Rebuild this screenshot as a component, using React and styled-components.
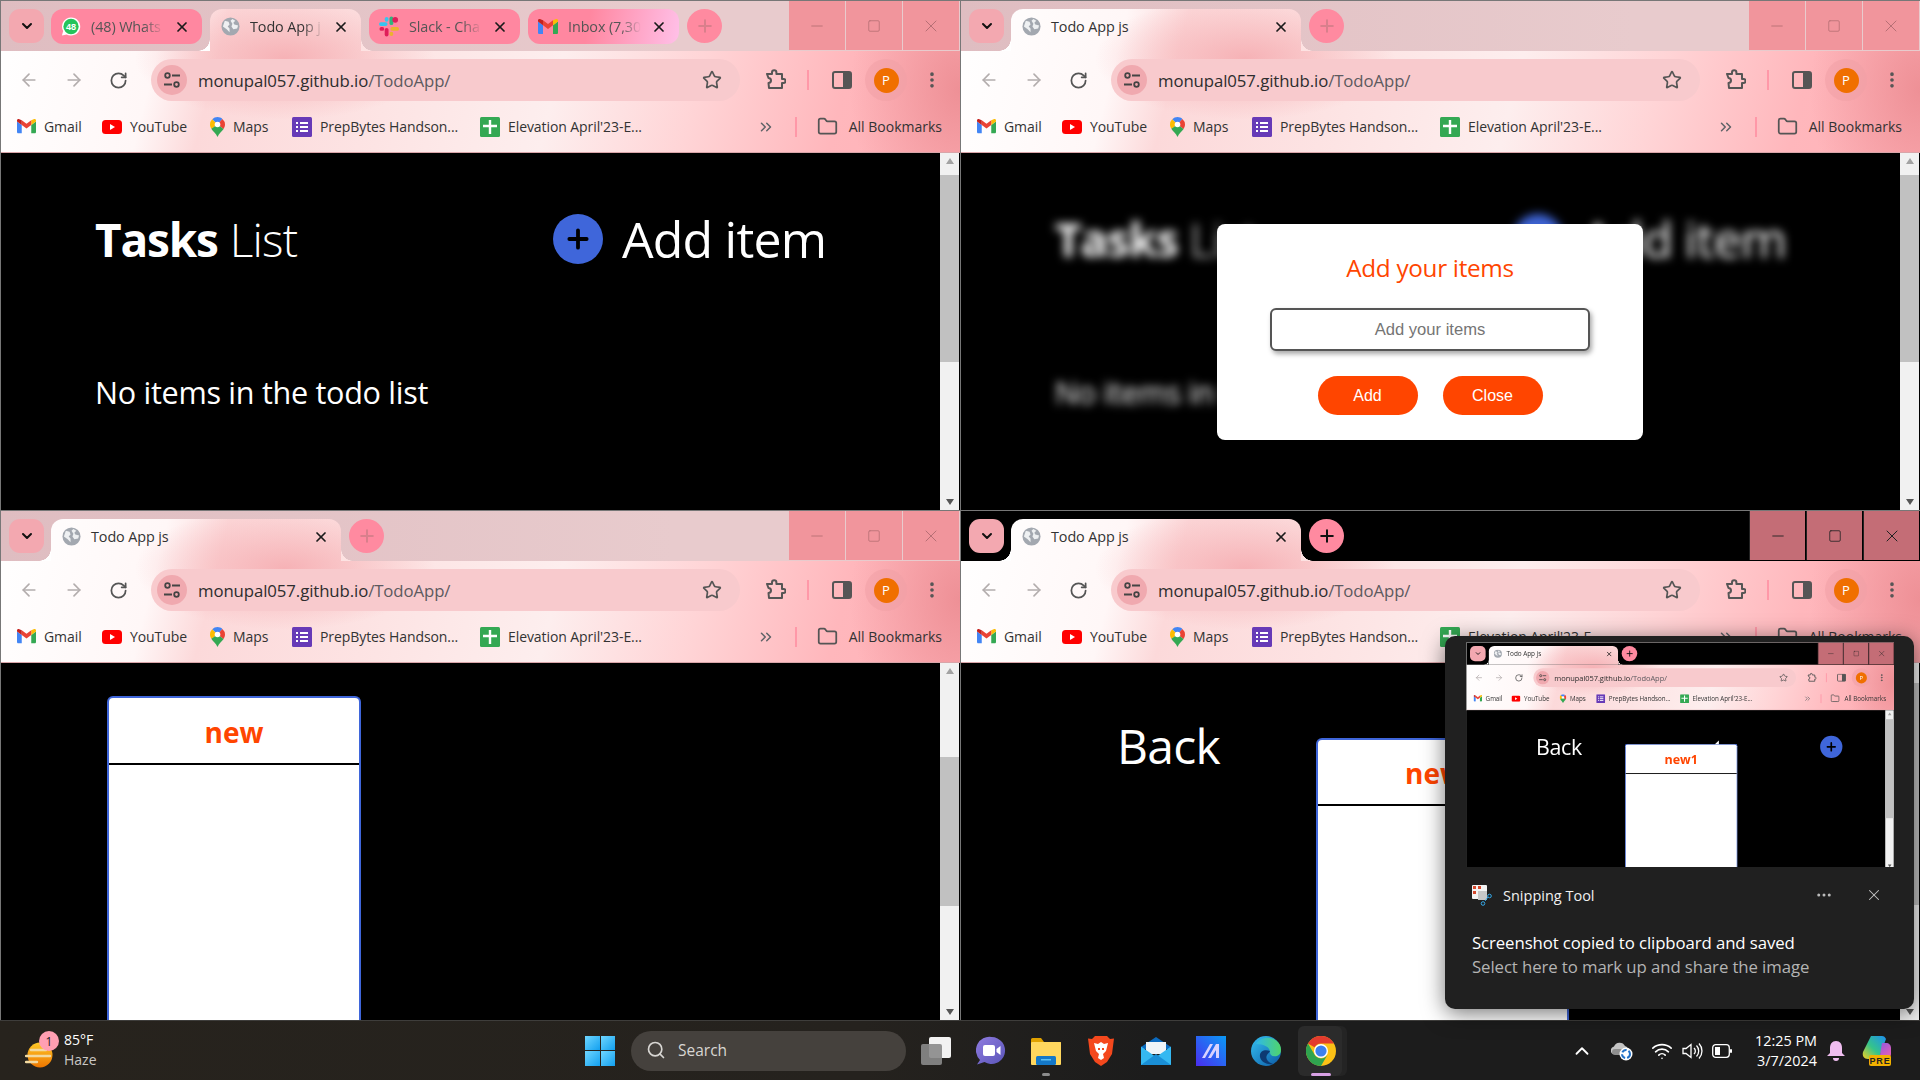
import React from "react";
import styled, { createGlobalStyle, css } from "styled-components";
import {
  ArrowLeft, ArrowRight, RotateCw, Star, EllipsisVertical, ChevronDown, X, Plus, Minus, Square,
  Folder, Search, ChevronsRight, ChevronUp, Wifi, Ellipsis,
} from "lucide-react";

const UI_FONT = `"Open Sans", "Noto Sans", sans-serif`;
const ORANGE = "#ff4500";
const BLUE = "#3f66da";

const GlobalStyle = createGlobalStyle`
  html, body { margin: 0; padding: 0; background: #000; overflow: hidden; }
  * { box-sizing: border-box; }
`;

// chrome theme picture, same one behind toolbar and active tab
const themeBg = css`
  background-color: #fff;
  background-image:
    radial-gradient(ellipse 150px 62px at 285px 58px, #f6b2b6 0%, rgba(246, 178, 182, 0) 100%),
    radial-gradient(ellipse 110px 150px at 960px 90px, #ee9096 0%, rgba(238, 144, 150, 0) 100%),
    linear-gradient(104deg, #fff 0, #fff7f7 165px, #fcd9da 225px, #fde4e4 400px, #fdeeee 560px, #ffd4d6 700px, #ffb7bc 840px, #ffb2b8 960px);
  background-size: 960px 153px;
  background-repeat: no-repeat;
`;

const Desktop = styled.div`
  width: 1920px;
  height: 1080px;
  position: relative;
  overflow: hidden;
  font-family: ${UI_FONT};
`;

const WindowGrid = styled.div`
  display: grid;
  grid-template-columns: 960px 960px;
  grid-template-rows: 510px 510px;
`;

const WindowBox = styled.div`
  width: 960px;
  height: 510px;
  display: flex;
  flex-direction: column;
  overflow: hidden;
  border-left: 1px solid #777;
  border-top: 1px solid #777;
  background: #000;
`;

const ChromeFrame = styled.div`
  ${themeBg}
  background-position: -1px -1px;
  height: 152px;
  flex: none;
  display: flex;
  flex-direction: column;
  border-bottom: 1px solid #d9a5a9;
`;

const TabStrip = styled.div`
  height: 50px;
  flex: none;
  display: flex;
  align-items: flex-start;
  padding-left: 8px;
  background: ${(p) => (p.$focused ? "#000" : "linear-gradient(90deg, #dfbdc1, #e8cbcd 70%)")};
`;

const TabMenu = styled.div`
  width: 35px;
  height: 34px;
  margin-top: 8px;
  border-radius: 11px;
  background: #f3a8b0;
  display: flex;
  align-items: center;
  justify-content: center;
  color: #111;
`;

const Tab = styled.div`
  width: ${(p) => p.$width}px;
  height: 35px;
  margin: 8px 0 0 ${(p) => p.$gap}px;
  padding: 0 10px;
  display: flex;
  align-items: center;
  flex: none;
  border-radius: 12px;
  background: ${(p) => p.$tint};
  color: #555;
`;

const ActiveTab = styled.div`
  width: ${(p) => p.$width}px;
  height: 42px;
  margin: 8px 0 0 ${(p) => p.$gap}px;
  padding: 0 10px 7px 10px;
  display: flex;
  align-items: center;
  flex: none;
  position: relative;
  border-radius: 12px 12px 0 0;
  color: #333;
  ${themeBg}
  background-position: -${(p) => p.$left}px -9px;

  &::before, &::after {
    content: "";
    position: absolute;
    bottom: 0;
    width: 12px;
    height: 12px;
  }
  &::before {
    left: -12px;
    background: #fff;
    -webkit-mask-image: radial-gradient(circle at 0 0, transparent 11.5px, #000 12px);
    mask-image: radial-gradient(circle at 0 0, transparent 11.5px, #000 12px);
  }
  &::after {
    right: -12px;
    background: #fde2e2;
    -webkit-mask-image: radial-gradient(circle at 100% 0, transparent 11.5px, #000 12px);
    mask-image: radial-gradient(circle at 100% 0, transparent 11.5px, #000 12px);
  }
`;

const TabIcon = styled.span`
  width: 20px;
  height: 20px;
  flex: none;
  display: flex;
  align-items: center;
  justify-content: center;
`;

const TabTitle = styled.span`
  flex: 1;
  min-width: 0;
  margin: 0 8px 0 10px;
  font-size: 14.4px;
  letter-spacing: -0.1px;
  white-space: nowrap;
  -webkit-mask-image: ${(p) => (p.$fade ? "linear-gradient(90deg, #000 72%, transparent 100%)" : "none")};
  mask-image: ${(p) => (p.$fade ? "linear-gradient(90deg, #000 72%, transparent 100%)" : "none")};
`;

const TabClose = styled.span`
  width: 20px;
  height: 20px;
  flex: none;
  display: flex;
  align-items: center;
  justify-content: center;
  color: #1a1a1a;
`;

const NewTab = styled.div`
  width: 35px;
  height: 34px;
  margin: 8px 0 0 8px;
  border-radius: 50%;
  flex: none;
  background: #ff8aa0;
  color: ${(p) => (p.$focused ? "#111" : "#d97f8c")};
  display: flex;
  align-items: center;
  justify-content: center;
`;

const Controls = styled.div`
  margin-left: auto;
  display: flex;
  height: 49px;
  gap: 1px;
  padding-right: 1px;
`;

const ControlBtn = styled.div`
  width: 56px;
  display: flex;
  align-items: center;
  justify-content: center;
  color: ${(p) => (p.$focused ? "#222" : "#b76f75")};
  background: ${(p) => (p.$focused ? "#c46d76" : "#f1959c")};
  border-left: ${(p) => (p.$focused ? "1px solid #222" : "none")};
`;

const Toolbar = styled.div`
  height: 51px;
  flex: none;
  display: flex;
  align-items: center;
  padding: 7px 0 0 5px;
`;

const ToolBtn = styled.div`
  width: 45px;
  height: 36px;
  flex: none;
  display: flex;
  align-items: center;
  justify-content: center;
  color: ${(p) => (p.$off ? "#b3adad" : "#555")};
  margin-left: ${(p) => p.$ml || 0}px;
`;

const Omnibox = styled.div`
  width: 589px;
  height: 42px;
  margin-left: 10px;
  border-radius: 21px;
  background: #f8cacd;
  display: flex;
  align-items: center;
  padding-left: 6px;
  flex: none;
`;

const SiteInfo = styled.div`
  width: 30px;
  height: 30px;
  border-radius: 50%;
  background: #f0a9af;
  display: flex;
  align-items: center;
  justify-content: center;
  flex: none;
`;

const UrlText = styled.span`
  margin-left: 11px;
  font-size: 16.8px;
  color: #2d2d2d;
  letter-spacing: -0.1px;
  span { color: #5d5a5f; }
`;

const StarSlot = styled.div`
  margin-left: auto;
  margin-right: 18px;
  color: #555;
  display: flex;
`;

const ToolSep = styled.div`
  width: 2px;
  height: 20px;
  margin-left: ${(p) => p.$ml}px;
  margin-right: ${(p) => p.$mr || 0}px;
  background: #ff98a8;
  flex: none;
`;

const ProfileRing = styled.div`
  width: 42px;
  height: 42px;
  margin-left: 1px;
  border-radius: 50%;
  background: rgba(240, 160, 165, 0.55);
  display: flex;
  align-items: center;
  justify-content: center;
  flex: none;
`;

const Avatar = styled.div`
  width: 25px;
  height: 25px;
  border-radius: 50%;
  background: #f06f00;
  color: #fff;
  font-size: 13px;
  display: flex;
  align-items: center;
  justify-content: center;
`;

const BookmarkBar = styled.div`
  flex: 1;
  display: flex;
  align-items: center;
  padding-left: 16px;
  padding-bottom: 1px;
`;

const Bookmark = styled.div`
  width: ${(p) => p.$width}px;
  display: flex;
  align-items: center;
  gap: 8px;
  flex: none;
  font-size: 14px;
  letter-spacing: -0.08px;
  color: #333;
  white-space: nowrap;
`;

const BookmarkEnd = styled.div`
  margin-left: auto;
  display: flex;
  align-items: center;
  font-size: 14px;
  letter-spacing: 0;
  color: #333;
  padding-right: 18px;
`;

const OverflowMark = styled.div`
  color: #5f6368;
  display: flex;
  margin-right: 20px;
`;

const FolderMark = styled.div`
  color: #555;
  display: flex;
  margin: 0 11px 0 20px;
`;

const ContentRow = styled.div`
  flex: 1;
  min-height: 0;
  display: flex;
  background: #000;
`;

const Page = styled.div`
  flex: 1;
  min-width: 0;
  position: relative;
  color: #fff;
  overflow: hidden;
`;

const ScrollTrack = styled.div`
  width: 19px;
  margin-right: 1px;
  flex: none;
  background: #f1f1f1;
  display: flex;
  flex-direction: column;
  align-items: center;
  justify-content: space-between;
  padding: 5px 0;
  position: relative;
`;

const ScrollThumb = styled.div`
  position: absolute;
  left: 0;
  right: 0;
  top: ${(p) => p.$top}px;
  height: ${(p) => p.$height}px;
  background: #c1c1c1;
`;

const ScrollArrow = styled.div`
  width: 0;
  height: 0;
  border-left: 4px solid transparent;
  border-right: 4px solid transparent;
  ${(p) => (p.$down ? "border-top: 6px solid #555;" : "border-bottom: 6px solid #a3a3a3;")}
`;

const TaskHeader = styled.div`
  display: flex;
  align-items: center;
  margin: 56px 0 0 94px;
`;

const TasksTitle = styled.div`
  width: 458px;
  font-size: 46px;
  line-height: 60px;
  flex: none;
  font-weight: 300;
  letter-spacing: -0.8px;
  b { font-weight: 700; margin-right: 12px; letter-spacing: -1.2px; }
`;

const AddCircle = styled.div`
  width: 50px;
  height: 50px;
  border-radius: 50%;
  background: ${BLUE};
  color: #000;
  display: flex;
  align-items: center;
  justify-content: center;
  flex: none;
`;

const AddText = styled.div`
  margin-left: 19px;
  font-size: 50px;
  line-height: 60px;
  letter-spacing: -0.8px;
`;

const EmptyText = styled.div`
  margin: 102px 0 0 94px;
  font-size: 30.6px;
  line-height: 42px;
  letter-spacing: -0.3px;
`;

const Blurred = styled.div`
  filter: blur(5px);
`;

const Modal = styled.div`
  position: absolute;
  left: 256px;
  top: 71px;
  width: 426px;
  height: 216px;
  background: #fff;
  border-radius: 8px;
  display: flex;
  flex-direction: column;
  align-items: center;
  padding-top: 27px;
`;

const ModalTitle = styled.div`
  color: ${ORANGE};
  font-size: 24.3px;
  line-height: 34px;
  letter-spacing: -0.3px;
`;

const ModalInput = styled.input`
  width: 320px;
  height: 43px;
  margin-top: 23px;
  border: 2px solid #555;
  border-radius: 6px;
  box-shadow: 2px 3px 5px rgba(0, 0, 0, 0.35);
  font-family: "Liberation Sans", Arial, sans-serif;
  font-size: 16.6px;
  text-align: center;
  background: #fff;
  outline: none;
  &::placeholder { color: #757575; opacity: 1; }
`;

const ModalActions = styled.div`
  display: flex;
  gap: 25px;
  margin-top: 25px;
`;

const ModalBtn = styled.div`
  width: 100px;
  height: 39px;
  border-radius: 20px;
  background: ${ORANGE};
  color: #fff;
  font-family: "Liberation Sans", Arial, sans-serif;
  font-size: 16px;
  display: flex;
  align-items: center;
  justify-content: center;
`;

const CardRow = styled.div`
  display: flex;
  align-items: flex-start;
  padding-left: ${(p) => p.$left}px;
  height: 100%;
`;

const BackLabel = styled.div`
  width: 199px;
  margin-top: 50px;
  font-size: 48px;
  line-height: 66px;
  letter-spacing: -0.7px;
  flex: none;
`;

const Card = styled.div`
  width: ${(p) => p.$width}px;
  margin-top: ${(p) => p.$top}px;
  height: 100%;
  flex: none;
  position: relative;
  background: #fff;
  border: 2px solid ${BLUE};
  border-bottom: none;
  border-radius: 6px 6px 0 0;
`;

// little mark poking out of the card top in the snip preview
const CardNotch = styled.div`
  position: absolute;
  right: 40px;
  top: -9px;
  width: 0;
  height: 0;
  border-left: 9px solid transparent;
  border-bottom: 8px solid #fff;
`;

const CardTitle = styled.div`
  height: ${(p) => p.$height}px;
  padding-top: 2px;
  border-bottom: 2px solid #000;
  color: ${ORANGE};
  font-size: 28px;
  font-weight: 700;
  display: flex;
  align-items: center;
  justify-content: center;
`;

const CornerPlus = styled.div`
  margin: 57px 0 0 185px;
  flex: none;
`;

const Taskbar = styled.div`
  height: 60px;
  display: flex;
  align-items: center;
  background: linear-gradient(90deg, #27231d, #25221e 45%, #1c1c1c 60%);
  border-top: 1px solid #3e3d3b;
  color: #fff;
  font-family: ${UI_FONT};
  position: relative;
`;

const Weather = styled.div`
  width: 585px;
  flex: none;
  display: flex;
  align-items: center;
  padding-left: 25px;
  gap: 11px;
`;

const WeatherIcon = styled.div`
  position: relative;
  width: 28px;
  height: 26px;
  margin-top: 9px;
  flex: none;
`;

const WeatherBadge = styled.div`
  position: absolute;
  left: 14px;
  top: -11px;
  width: 20px;
  height: 20px;
  border-radius: 50%;
  background: #ff9fb2;
  color: #222;
  font-size: 12px;
  display: flex;
  align-items: center;
  justify-content: center;
`;

const WeatherText = styled.div`
  font-size: 14px;
  line-height: 20px;
  margin-top: -2px;
  span { display: block; color: #c9c7c4; }
`;

const StartBtn = styled.div`
  width: 30px;
  height: 30px;
  flex: none;
  display: grid;
  grid-template-columns: 1fr 1fr;
  gap: 1px;
  background: transparent;
  i { background: linear-gradient(135deg, #6fd6ff, #12a0f0); display: block; }
`;

const SearchBox = styled.div`
  width: 275px;
  height: 40px;
  margin-left: 16px;
  border-radius: 20px;
  background: #45413d;
  display: flex;
  align-items: center;
  padding: 0 0 2px 15px;
  gap: 12px;
  color: #d8d6d3;
  font-size: 15.5px;
  flex: none;
`;

const TaskView = styled.div`
  margin-left: 15px;
  width: 31px;
  height: 30px;
  flex: none;
  position: relative;
`;

const TaskSlot = styled.div`
  width: 55px;
  height: 50px;
  flex: none;
  display: flex;
  align-items: center;
  justify-content: center;
  position: relative;
  margin-left: ${(p) => p.$ml || 0}px;
  ${(p) => p.$active && `
    &::before {
      content: "";
      position: absolute;
      left: 5px;
      right: 6px;
      top: 0;
      bottom: 0;
      border-radius: 6px;
      background: #2b2b2b;
      box-shadow: 5px 0 0 #242424;
    }
  `}
  svg { position: relative; }
`;

const RunDot = styled.div`
  position: absolute;
  bottom: 0;
  left: 50%;
  transform: translateX(-50%);
  height: 3px;
  border-radius: 2px;
  width: ${(p) => (p.$active ? 20 : 8)}px;
  background: ${(p) => (p.$active ? "#d8a0e4" : "#8c8c8c")};
`;

const Tray = styled.div`
  margin-left: auto;
  display: flex;
  align-items: center;
  color: #fff;
  padding-right: 21px;
`;

const TraySlot = styled.div`
  width: ${(p) => p.$width}px;
  flex: none;
  display: flex;
  align-items: center;
  justify-content: center;
`;

const Clock = styled.div`
  width: 80px;
  text-align: right;
  font-size: 14.4px;
  line-height: 20px;
  flex: none;
  white-space: nowrap;
`;

const Toast = styled.div`
  position: absolute;
  left: 1445px;
  top: 636px;
  width: 469px;
  height: 373px;
  border-radius: 10px;
  background: #202020;
  box-shadow: 0 4px 22px rgba(0, 0, 0, 0.55);
  color: #fff;
  padding: 6px 20px 0 21px;
`;

const Thumb = styled.div`
  width: 428px;
  height: 225px;
  overflow: hidden;
`;

const ThumbScale = styled.div`
  width: 960px;
  height: 505px;
  transform: scale(0.446);
  transform-origin: 0 0;
`;

const ToastHead = styled.div`
  display: flex;
  align-items: center;
  height: 30px;
  margin: 13px 0 0 6px;
  font-size: 14.5px;
  color: #f0f0f0;
`;

const ToastApp = styled.span`
  margin-left: 11px;
`;

const ToastDots = styled.div`
  margin-left: auto;
  margin-right: 4px;
  color: #bbb;
  display: flex;
`;

const ToastClose = styled.div`
  margin: 0 11px 0 28px;
  color: #c6c6c6;
  display: flex;
`;

const ToastBody = styled.div`
  margin: 21px 0 0 6px;
  font-size: 16.8px;
  line-height: 24px;
  letter-spacing: -0.1px;
  color: #fff;
  white-space: nowrap;
  span { display: block; color: #b4b4b4; }
`;

/* favicons and logos */
const Globe = () => (
  <svg width="19" height="19" viewBox="0 0 20 20">
    <circle cx="10" cy="10" r="9.5" fill="#a3a8b0" />
    <path d="M4 4l4 1 1 3-2 2 2 2v4l-3-3-4-3zM12 2l3 2-2 2 1 2 4 1-1 3-4 1-2-3 1-3-2-3z" fill="#eef0f2" />
  </svg>
);

const WhatsApp = () => (
  <svg width="21" height="21" viewBox="0 0 22 22">
    <path d="M11 1a10 10 0 0 0-8.6 15L1 21l5.2-1.3A10 10 0 1 0 11 1z" fill="#fff" />
    <circle cx="11" cy="11" r="8.4" fill="#25c45b" />
    <text x="11" y="14.6" textAnchor="middle" fontSize="10" fontWeight="700" fill="#fff" fontFamily="Liberation Sans">48</text>
  </svg>
);

const Slack = () => (
  <svg width="21" height="21" viewBox="0 0 21 21" strokeWidth="4" strokeLinecap="round" fill="none">
    <path d="M2 8h5" stroke="#36c5f0" /><path d="M8 2.4v1" stroke="#36c5f0" />
    <path d="M13 2v5" stroke="#2eb67d" /><circle cx="17" cy="3.5" r="3" fill="#e01e5a" stroke="none" />
    <path d="M14 13h5" stroke="#ecb22e" /><path d="M13 18v.4" stroke="#ecb22e" />
    <path d="M8 14v5" stroke="#e01e5a" /><path d="M2.5 13h1" stroke="#e01e5a" />
  </svg>
);

const Gmail = ({ size = 19 }) => (
  <svg width={size} height={size * 0.75} viewBox="0 0 24 18">
    <path d="M1.6 18H6V7.5L0 3v13.4C0 17.3.7 18 1.6 18z" fill="#4285f4" />
    <path d="M18 18h4.4c.9 0 1.6-.7 1.6-1.6V3l-6 4.5z" fill="#34a853" />
    <path d="M18 1.5v6L24 3V1.6C24 .2 22.2-.6 21.1.3z" fill="#fbbc04" />
    <path d="M6 7.5v-6l6 4.5 6-4.5v6L12 12z" fill="#ea4335" />
    <path d="M0 1.6V3l6 4.5v-6L2.9.3C1.8-.6 0 .2 0 1.6z" fill="#c5221f" />
  </svg>
);

const YouTube = () => (
  <svg width="20" height="14" viewBox="0 0 20 14">
    <rect width="20" height="14" rx="3.5" fill="#ff0000" />
    <path d="M8 4l5 3-5 3z" fill="#fff" />
  </svg>
);

const Maps = () => (
  <svg width="15" height="20" viewBox="0 0 15 20">
    <path d="M2.2 2.2A7.5 7.5 0 0 1 7.5 0c1.9 0 3.6.7 4.9 1.9L7.5 7.5z" fill="#4285f4" />
    <path d="M12.4 1.9A7.5 7.5 0 0 1 15 7.5c0 1.6-.6 3-1.4 4.4L7.5 7.5z" fill="#ea4335" />
    <path d="M2.2 2.2A7.4 7.4 0 0 0 0 7.5c0 1.7.6 3 1.3 4.2L7.5 7.5z" fill="#fbbc04" />
    <path d="M1.3 11.7C3 14.5 6 16 7.5 20c1.5-4 4.4-5.4 6.1-8.1L7.5 7.5z" fill="#34a853" />
    <circle cx="7.5" cy="7.5" r="2.8" fill="#fff" />
  </svg>
);

const Forms = () => (
  <svg width="20" height="20" viewBox="0 0 20 20">
    <rect width="20" height="20" rx="1.5" fill="#673ab7" />
    <path d="M8 6h8M8 10h8M8 14h8" stroke="#fff" strokeWidth="2" />
    <path d="M4 6h2M4 10h2M4 14h2" stroke="#fff" strokeWidth="2" />
  </svg>
);

const Sheets = () => (
  <svg width="20" height="20" viewBox="0 0 20 20">
    <rect width="20" height="20" rx="1.5" fill="#34a853" />
    <path d="M3 9h14M10 3v14" stroke="#fff" strokeWidth="2.4" />
  </svg>
);

const TuneIcon = () => (
  <svg width="18" height="18" viewBox="0 0 18 18" fill="none" stroke="#444" strokeWidth="1.8">
    <circle cx="4.5" cy="4.5" r="2.3" /><path d="M9 4.5h8M1 13.5h8" />
    <circle cx="13.5" cy="13.5" r="2.3" />
  </svg>
);

const PuzzleIcon = () => (
  <svg width="22" height="22" viewBox="0 0 22 22" fill="none" stroke="#555" strokeWidth="2" strokeLinejoin="round">
    <path d="M3 5h5V3.5a2.2 2.2 0 0 1 4.4 0V5H18v5h1.5a2 2 0 0 1 0 4H18v5H5l-.5-5A2.5 2.5 0 0 0 4.5 9z" />
  </svg>
);

const SidePanel = () => (
  <svg width="20" height="18" viewBox="0 0 20 18">
    <rect x="1" y="1" width="18" height="16" rx="2" fill="none" stroke="#555" strokeWidth="2" />
    <rect x="11" y="1" width="8" height="16" fill="#555" />
  </svg>
);

const MiniPlus = ({ size, color = "#000" }) => (
  <svg width={size} height={size} viewBox="0 0 24 24" stroke={color} strokeWidth="3.5" strokeLinecap="round">
    <path d="M12 4v16M4 12h16" />
  </svg>
);

const WeatherSun = () => (
  <svg width="28" height="26" viewBox="0 0 28 26">
    <defs>
      <linearGradient id="sun" x1="0" y1="0" x2="0" y2="1">
        <stop offset="0" stopColor="#ffc928" /><stop offset="1" stopColor="#ee7600" />
      </linearGradient>
    </defs>
    <circle cx="15" cy="13" r="12.5" fill="url(#sun)" />
    <path d="M6 8h15M1 14h24M1 20h11" stroke="#f2d9a0" strokeWidth="2.4" strokeLinecap="round" />
  </svg>
);

const TeamsIcon = () => (
  <svg width="30" height="30" viewBox="0 0 30 30">
    <defs>
      <linearGradient id="teams" x1="0" y1="0" x2="1" y2="1">
        <stop offset="0" stopColor="#8f7be0" /><stop offset="1" stopColor="#5a55b8" />
      </linearGradient>
    </defs>
    <path d="M15.5 1a13.5 13.5 0 1 1-7 25L1 28.5 4 24A13.5 13.5 0 0 1 15.5 1z" fill="url(#teams)" />
    <rect x="7" y="9" width="12" height="11" rx="2" fill="#fff" />
    <path d="M20.5 13l4-3v9l-4-3z" fill="#fff" />
  </svg>
);

const ExplorerIcon = () => (
  <svg width="30" height="28" viewBox="0 0 30 28">
    <path d="M0 2.5A1.5 1.5 0 0 1 1.5 1H10l3 4H30v2H0z" fill="#e0a100" />
    <rect y="5" width="30" height="23" rx="1" fill="#ffd75e" />
    <rect x="5" y="19" width="20" height="9" rx="1.5" fill="#1478c8" />
    <rect x="10" y="22" width="10" height="1.5" fill="#5cc0f5" />
  </svg>
);

const BraveIcon = () => (
  <svg width="26" height="30" viewBox="0 0 26 30">
    <path d="M7 0h12l3 3 4-.5L24 18l-5 8-6 4-6-4-5-8L0 2.5 4 3z" fill="#f4481d" />
    <path d="M13 6l-3 2-4-1 2 8 3 3-1 4 3 2 3-2-1-4 3-3 2-8-4 1z" fill="#fff" />
    <path d="M10 13h2M14 13h2" stroke="#f4481d" strokeWidth="2" />
  </svg>
);

const MailIcon = () => (
  <svg width="30" height="28" viewBox="0 0 30 28">
    <path d="M0 10 15 0l15 10v2H0z" fill="#0b6abf" />
    <path d="M5 5h20v12H5z" fill="#eef4f8" />
    <path d="M0 9.5 15 20 30 9.5V28H0z" fill="#35b8f1" />
    <path d="M0 28 15 17l15 11z" fill="#1a8fd6" />
  </svg>
);

const AppIcon = () => (
  <svg width="30" height="30" viewBox="0 0 30 30">
    <defs>
      <linearGradient id="appA" x1="0" y1="1" x2="1" y2="0">
        <stop offset="0" stopColor="#4a2df0" /><stop offset="1" stopColor="#0a9af5" />
      </linearGradient>
    </defs>
    <rect width="30" height="30" fill="url(#appA)" />
    <path d="M6 22 14 8h3L9 22zM12 22 20 8h3v14h-3v-8l-5 8z" fill="#d9d2ff" />
  </svg>
);

const EdgeIcon = () => (
  <svg width="30" height="30" viewBox="0 0 30 30">
    <defs>
      <linearGradient id="edge1" x1="0" y1="0" x2="1" y2="1">
        <stop offset="0" stopColor="#35c1f1" /><stop offset="1" stopColor="#0c59a4" />
      </linearGradient>
      <linearGradient id="edge2" x1="0" y1="0" x2="1" y2="0">
        <stop offset="0" stopColor="#2fb8e8" /><stop offset="1" stopColor="#50d46a" />
      </linearGradient>
    </defs>
    <circle cx="15" cy="15" r="15" fill="url(#edge1)" />
    <path d="M5 8C9 0 24-1 29 9c2 5 1 10-3 11-5 1-7-1-7-4 0-5-6-8-14-8z" fill="url(#edge2)" />
    <path d="M19 15c-5-2-11 0-10 6 1 5 7 8 13 7-5-2-8-5-6-9 1-2 3-3 3-4z" fill="#0d3a72" />
  </svg>
);

const ChromeIcon = () => (
  <svg width="30" height="30" viewBox="0 0 30 30">
    <circle cx="15" cy="15" r="15" fill="#fbc116" />
    <path d="M2 7.5A15 15 0 0 1 28 7.5H15A7.5 7.5 0 0 0 8.5 11.3z" fill="#e33b2e" />
    <path d="M2 7.5A15 15 0 0 0 15 30l6.5-11.3a7.5 7.5 0 0 1-13-.1z" fill="#2fa44f" />
    <circle cx="15" cy="15" r="7" fill="#fff" /><circle cx="15" cy="15" r="5.6" fill="#3d80ee" />
  </svg>
);

const CloudSync = () => (
  <svg width="22" height="20" viewBox="0 0 22 20">
    <path d="M2 13a4 4 0 0 1 1-7.5A6 6 0 0 1 14 5a4 4 0 0 1 3 3H9l-3 5z" fill="#c4c4c4" />
    <path d="M1 11a3 3 0 0 1 3-3h8v6H4a3 3 0 0 1-3-3z" fill="#8e8e8e" />
    <circle cx="15" cy="13" r="6.5" fill="#fff" />
    <circle cx="15" cy="13" r="4" fill="none" stroke="#2272c8" strokeWidth="2" strokeDasharray="5 2" />
  </svg>
);

const Speaker = () => (
  <svg width="21" height="18" viewBox="0 0 21 18" fill="none" stroke="#fff" strokeWidth="1.3">
    <path d="M1 6.5h3L9 2.5v13L4 11.5H1z" />
    <path d="M12 6a4 4 0 0 1 0 6M14.5 3.5a8 8 0 0 1 0 11M17 1.5a11 11 0 0 1 0 15" />
  </svg>
);

const BatteryIcon = () => (
  <svg width="20" height="14" viewBox="0 0 20 14">
    <rect x=".7" y=".7" width="16.6" height="12.6" rx="3" fill="none" stroke="#fff" strokeWidth="1.3" />
    <rect x="3" y="3" width="5" height="8" fill="#fff" />
    <rect x="18" y="5" width="2" height="4" rx="1" fill="#fff" />
  </svg>
);

const BellIcon = () => (
  <svg width="18" height="20" viewBox="0 0 18 20" fill="#f0bdf0">
    <path d="M9 0c4 0 6 3 6 7v5l3 3H0l3-3V7c0-4 2-7 6-7z" />
    <path d="M6 17h6a3 3 0 0 1-6 0z" />
  </svg>
);

const CopilotIcon = () => (
  <svg width="30" height="30" viewBox="0 0 30 30">
    <defs>
      <linearGradient id="cop1" x1="0" y1="1" x2="1" y2="0">
        <stop offset="0" stopColor="#f5d020" /><stop offset=".45" stopColor="#35c48a" /><stop offset="1" stopColor="#1e90f0" />
      </linearGradient>
      <linearGradient id="cop2" x1="0" y1="0" x2="1" y2="1">
        <stop offset="0" stopColor="#8058e8" /><stop offset="1" stopColor="#f060b0" />
      </linearGradient>
    </defs>
    <path d="M9 0h11c2 0 3 1 4 3l-6 16c-1 3-3 4-6 4H6C2 23 0 20 1 16z" fill="url(#cop1)" />
    <path d="M20 7h4c3 0 5 2 5 5v6c0 2-2 5-5 5H12c3 0 5-1 6-4z" fill="url(#cop2)" />
    <rect x="7" y="19" width="22" height="11" rx="2" fill="#f2b000" />
    <text x="18" y="28" textAnchor="middle" fontSize="9" fontWeight="700" fill="#222" fontFamily="Liberation Sans" letterSpacing=".8">PRE</text>
  </svg>
);

const SnipIcon = () => (
  <svg width="20" height="21" viewBox="0 0 20 21">
    <rect x="0" y="0" width="15" height="14" rx="1" fill="#f4f4f4" />
    <path d="M1 1h3v3H1zM6 1h3v3H6zM1 6h3v3H1z" fill="#d64a2e" />
    <rect x="6" y="6" width="9" height="9" fill="#c8c8c8" />
    <circle cx="17.5" cy="11" r="1.8" fill="none" stroke="#35a8e8" />
    <circle cx="11" cy="18.5" r="1.8" fill="none" stroke="#35a8e8" />
    <path d="M13 16l3-4" stroke="#35a8e8" />
  </svg>
);

const BOOKMARKS = [
  { label: "Gmail", width: 85, icon: <Gmail /> },
  { label: "YouTube", width: 108, icon: <YouTube /> },
  { label: "Maps", width: 82, icon: <Maps /> },
  { label: "PrepBytes Handson...", width: 188, icon: <Forms /> },
  { label: "Elevation April'23-E...", width: 220, icon: <Sheets /> },
];

const FOUR_TABS = [
  { title: "(48) Whats", icon: <WhatsApp />, tint: "#ff87a0" },
  { title: "Todo App j", icon: <Globe />, active: true, left: 210 },
  { title: "Slack - Cha", icon: <Slack />, tint: "#ff87a0" },
  { title: "Inbox (7,30", icon: <Gmail size={20} />, tint: "linear-gradient(100deg, #ff87a0 40%, #ffc0e8)" },
];

const ONE_TAB = [{ title: "Todo App js", icon: <Globe />, active: true, left: 51, wide: true }];

const TabRow = ({ tabs, focused }) => (
  <TabStrip $focused={focused}>
    <TabMenu><ChevronDown size={16} strokeWidth={3} /></TabMenu>
    {tabs.map((t, i) => {
      const width = t.wide ? 290 : 151;
      const inner = (
        <>
          <TabIcon>{t.icon}</TabIcon>
          <TabTitle $fade={!t.wide}>{t.title}</TabTitle>
          <TabClose><X size={16} strokeWidth={2.6} /></TabClose>
        </>
      );
      return t.active
        ? <ActiveTab key={i} $width={width} $gap={i === 0 ? 7 : 8} $left={t.left}>{inner}</ActiveTab>
        : <Tab key={i} $width={width} $gap={i === 0 ? 7 : 8} $tint={t.tint}>{inner}</Tab>;
    })}
    <NewTab $focused={focused}><Plus size={20} strokeWidth={2.4} /></NewTab>
    <Controls>
      <ControlBtn $focused={focused}><Minus size={18} strokeWidth={1.2} /></ControlBtn>
      <ControlBtn $focused={focused}><Square size={14} strokeWidth={1.4} /></ControlBtn>
      <ControlBtn $focused={focused}><X size={20} strokeWidth={1.2} /></ControlBtn>
    </Controls>
  </TabStrip>
);

const BrowserChrome = ({ tabs, focused }) => (
  <ChromeFrame>
    <TabRow tabs={tabs} focused={focused} />
    <Toolbar>
      <ToolBtn $off><ArrowLeft size={20} strokeWidth={2} /></ToolBtn>
      <ToolBtn $off><ArrowRight size={20} strokeWidth={2} /></ToolBtn>
      <ToolBtn><RotateCw size={19} strokeWidth={2.2} /></ToolBtn>
      <Omnibox>
        <SiteInfo><TuneIcon /></SiteInfo>
        <UrlText>monupal057.github.io<span>/TodoApp/</span></UrlText>
        <StarSlot><Star size={20} strokeWidth={2} /></StarSlot>
      </Omnibox>
      <ToolBtn $ml={12}><PuzzleIcon /></ToolBtn>
      <ToolSep $ml={10} $mr={10} />
      <ToolBtn><SidePanel /></ToolBtn>
      <ProfileRing><Avatar>P</Avatar></ProfileRing>
      <ToolBtn $ml={2}><EllipsisVertical size={20} strokeWidth={2.4} /></ToolBtn>
    </Toolbar>
    <BookmarkBar>
      {BOOKMARKS.map((b) => (
        <Bookmark key={b.label} $width={b.width}>{b.icon}{b.label}</Bookmark>
      ))}
      <BookmarkEnd>
        <OverflowMark><ChevronsRight size={18} strokeWidth={2} /></OverflowMark>
        <ToolSep $ml={0} />
        <FolderMark><Folder size={21} strokeWidth={2} /></FolderMark>
        All Bookmarks
      </BookmarkEnd>
    </BookmarkBar>
  </ChromeFrame>
);

const Browser = ({ tabs, focused, thumb, children }) => (
  <WindowBox>
    <BrowserChrome tabs={tabs} focused={focused} />
    <ContentRow>
      <Page>{children}</Page>
      <ScrollTrack>
        <ScrollArrow />
        <ScrollThumb $top={thumb.top} $height={thumb.height} />
        <ScrollArrow $down />
      </ScrollTrack>
    </ContentRow>
  </WindowBox>
);

const TasksHome = () => (
  <>
    <TaskHeader>
      <TasksTitle><b>Tasks</b>List</TasksTitle>
      <AddCircle><MiniPlus size={26} /></AddCircle>
      <AddText>Add item</AddText>
    </TaskHeader>
    <EmptyText>No items in the todo list</EmptyText>
  </>
);

const BackView = () => (
  <CardRow $left={156}>
    <BackLabel>Back</BackLabel>
    <Card $width={253} $top={75}>
      <CardNotch />
      <CardTitle $height={66}>new1</CardTitle>
    </Card>
    <CornerPlus><AddCircle><MiniPlus size={26} /></AddCircle></CornerPlus>
  </CardRow>
);

const App = () => (
  <Desktop>
    <GlobalStyle />
    <WindowGrid>
      <Browser tabs={FOUR_TABS} thumb={{ top: 22, height: 187 }}>
        <TasksHome />
      </Browser>
      <Browser tabs={ONE_TAB} thumb={{ top: 22, height: 187 }}>
        <Blurred><TasksHome /></Blurred>
        <Modal>
          <ModalTitle>Add your items</ModalTitle>
          <ModalInput placeholder="Add your items" readOnly />
          <ModalActions>
            <ModalBtn>Add</ModalBtn>
            <ModalBtn>Close</ModalBtn>
          </ModalActions>
        </Modal>
      </Browser>
      <Browser tabs={ONE_TAB} thumb={{ top: 94, height: 149 }}>
        <CardRow $left={106}>
          <Card $width={254} $top={33}>
            <CardTitle $height={67}>new</CardTitle>
          </Card>
        </CardRow>
      </Browser>
      <Browser tabs={ONE_TAB} focused thumb={{ top: 20, height: 222 }}>
        <BackView />
      </Browser>
    </WindowGrid>

    <Taskbar>
      <Weather>
        <WeatherIcon>
          <WeatherSun />
          <WeatherBadge>1</WeatherBadge>
        </WeatherIcon>
        <WeatherText>85°F<span>Haze</span></WeatherText>
      </Weather>
      <StartBtn><i /><i /><i /><i /></StartBtn>
      <SearchBox><Search size={20} strokeWidth={2} />Search</SearchBox>
      <TaskView>
        <svg width="31" height="30" viewBox="0 0 31 30">
          <rect x="8" y="1" width="22" height="21" rx="2" fill="#f2f2f2" />
          <rect x="0" y="8" width="21" height="21" rx="2" fill="#8a8a8a" opacity=".9" />
        </svg>
      </TaskView>
      <TaskSlot $ml={11}><TeamsIcon /></TaskSlot>
      <TaskSlot><ExplorerIcon /><RunDot /></TaskSlot>
      <TaskSlot><BraveIcon /></TaskSlot>
      <TaskSlot><MailIcon /></TaskSlot>
      <TaskSlot><AppIcon /></TaskSlot>
      <TaskSlot><EdgeIcon /></TaskSlot>
      <TaskSlot $active><ChromeIcon /><RunDot $active /></TaskSlot>
      <Tray>
        <TraySlot $width={30}><ChevronUp size={22} strokeWidth={2} /></TraySlot>
        <TraySlot $width={50}><CloudSync /></TraySlot>
        <TraySlot $width={30}><Wifi size={22} strokeWidth={1.8} /></TraySlot>
        <TraySlot $width={30}><Speaker /></TraySlot>
        <TraySlot $width={30}><BatteryIcon /></TraySlot>
        <Clock>12:25 PM<br />3/7/2024</Clock>
        <TraySlot $width={38}><BellIcon /></TraySlot>
        <TraySlot $width={44}><CopilotIcon /></TraySlot>
      </Tray>
    </Taskbar>

    <Toast>
      <Thumb>
        <ThumbScale>
          <Browser tabs={ONE_TAB} focused thumb={{ top: 20, height: 222 }}>
            <BackView />
          </Browser>
        </ThumbScale>
      </Thumb>
      <ToastHead>
        <SnipIcon />
        <ToastApp>Snipping Tool</ToastApp>
        <ToastDots><Ellipsis size={18} /></ToastDots>
        <ToastClose><X size={18} strokeWidth={1.4} /></ToastClose>
      </ToastHead>
      <ToastBody>
        Screenshot copied to clipboard and saved
        <span>Select here to mark up and share the image</span>
      </ToastBody>
    </Toast>
  </Desktop>
);

export default App;
